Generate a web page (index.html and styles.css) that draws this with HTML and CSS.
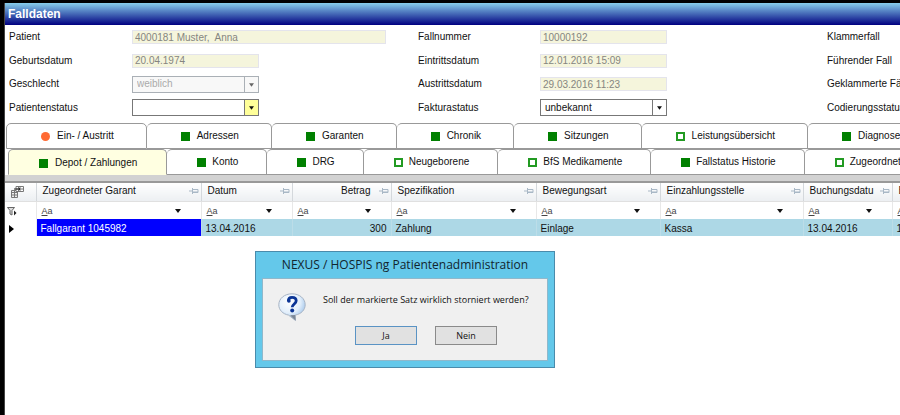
FILE: index.html
```html
<!DOCTYPE html>
<html lang="de">
<head>
<meta charset="utf-8">
<title>Falldaten</title>
<link rel="stylesheet" href="styles.css">
</head>
<body>
<svg class="defs" aria-hidden="true">
  <symbol id="pin" viewBox="0 0 10 8"><path d="M0 4h3M3.500 1v6M4 2.500h5v3H4M4 5h5" fill="none" stroke="#a9b8c6"/></symbol>
  <symbol id="arrow" viewBox="0 0 6 4"><path d="M0 0h6L3 4z" fill="currentColor"/></symbol>
</svg>
<main class="window">
  <h1 class="title">Falldaten</h1>
  <form class="fields">
    <label for="patient">Patient</label><input class="wide" id="patient" value="4000181 Muster,&nbsp; Anna" disabled>
    <label for="nr">Fallnummer</label><input id="nr" value="10000192" disabled>
    <span>Klammerfall</span>
    <label for="geb">Geburtsdatum</label><input id="geb" value="20.04.1974" disabled>
    <label for="ein">Eintrittsdatum</label><input id="ein" value="12.01.2016 15:09" disabled>
    <span>Führender Fall</span>
    <label for="sex">Geschlecht</label>
    <div class="combo off"><select id="sex" disabled><option>weiblich</option></select><svg><use href="#arrow"/></svg></div>
    <label for="aus">Austrittsdatum</label><input id="aus" value="29.03.2016 11:23" disabled>
    <span>Geklammerte Fälle</span>
    <label for="pst">Patientenstatus</label>
    <div class="combo yellow"><select id="pst"><option></option></select><svg><use href="#arrow"/></svg></div>
    <label for="fst">Fakturastatus</label>
    <div class="combo"><select id="fst"><option>unbekannt</option></select><svg><use href="#arrow"/></svg></div>
    <span>Codierungsstatus</span>
  </form>
  <nav class="tabs">
    <div class="tabrow upper">
      <button><i class="dot"></i>Ein- / Austritt</button><button><i class="full"></i>Adressen</button><button><i class="full"></i>Garanten</button><button><i class="full"></i>Chronik</button><button><i class="full"></i>Sitzungen</button><button><i class="open"></i>Leistungsübersicht</button><button><i class="full"></i>Diagnosen</button>
    </div>
    <div class="tabrow lower">
      <button class="active"><i class="full"></i>Depot / Zahlungen</button><button><i class="full"></i>Konto</button><button><i class="full"></i>DRG</button><button><i class="open"></i>Neugeborene</button><button><i class="open"></i>BfS Medikamente</button><button><i class="full"></i>Fallstatus Historie</button><button><i class="open"></i>Zugeordnete</button>
    </div>
  </nav>
  <div class="bar"></div>
  <table>
    <colgroup><col class="c-sel"><col class="c-gar"><col class="c-dat"><col class="c-bet"><col class="c-spe"><col class="c-bew"><col class="c-ste"><col class="c-buc"><col class="c-end"></colgroup>
    <thead>
      <tr>
        <th class="corner"><svg class="chooser" viewBox="0 0 13 12"><path d="M.5 4.500h6v7h-6zM.5 6.500h6M.5 9h6M3.500 4.500v7" fill="#eee" stroke="#777"/><path d="M5 .5h7.500v5H5zM5 3h7.500M9 .5v5" fill="#fff" stroke="#777"/><path d="M3 3h6M7 1.500 9 3 7 4.500" fill="none" stroke="#222"/></svg></th>
        <th><div>Zugeordneter Garant<svg><use href="#pin"/></svg></div></th>
        <th><div>Datum<svg><use href="#pin"/></svg></div></th>
        <th class="num"><div>Betrag<svg><use href="#pin"/></svg></div></th>
        <th><div>Spezifikation<svg><use href="#pin"/></svg></div></th>
        <th><div>Bewegungsart<svg><use href="#pin"/></svg></div></th>
        <th><div>Einzahlungsstelle<svg><use href="#pin"/></svg></div></th>
        <th><div>Buchungsdatu<svg><use href="#pin"/></svg></div></th>
        <th><div>B</div></th>
      </tr>
      <tr class="filter">
        <td class="rowhead"><svg class="funnel" viewBox="0 0 11 9"><path d="M.5.5h7L5 3.500V8L3 7V3.500z" fill="#ddd" stroke="#666"/><path d="M7 3.500v5L9.500 6z" fill="#222"/></svg></td>
        <td><div><u>A</u>a<svg><use href="#arrow"/></svg></div></td>
        <td><div><u>A</u>a<svg><use href="#arrow"/></svg></div></td>
        <td><div><u>A</u>a<svg><use href="#arrow"/></svg></div></td>
        <td><div><u>A</u>a<svg><use href="#arrow"/></svg></div></td>
        <td><div><u>A</u>a<svg><use href="#arrow"/></svg></div></td>
        <td><div><u>A</u>a<svg><use href="#arrow"/></svg></div></td>
        <td><div><u>A</u>a<svg><use href="#arrow"/></svg></div></td>
        <td><div><u>A</u>a</div></td>
      </tr>
    </thead>
    <tbody>
      <tr class="data">
        <td class="rowhead"><svg class="current" viewBox="0 0 5 8"><path d="M0 0l5 4-5 4z"/></svg></td>
        <td class="selected">Fallgarant 1045982</td><td>13.04.2016</td><td class="num">300</td><td>Zahlung</td><td>Einlage</td><td>Kassa</td><td>13.04.2016</td><td>1</td>
      </tr>
    </tbody>
  </table>
</main>
<section class="dialog" role="dialog" aria-labelledby="dlg">
  <h2 id="dlg">NEXUS / HOSPIS ng Patientenadministration</h2>
  <div class="body">
    <div class="message">
      <svg class="question" viewBox="0 0 28 28">
        <defs><radialGradient id="g" cx=".4" cy=".3" r=".75"><stop offset="0" stop-color="#fff"/><stop offset=".55" stop-color="#e3effb"/><stop offset="1" stop-color="#8db8e6"/></radialGradient></defs>
        <path d="M14 .8C6.500.8.8 5.500.8 11.800c0 5.200 4 9.200 9.700 10.300L17.500 27.500l-.3-5.400c5.900-1 10-5.200 10-10.300C27.200 5.500 21.500.8 14 .8z" fill="url(#g)" stroke="#a8b4c4"/>
        <path d="M12 22.300l5.500 5.200-.3-5.400z" fill="#7d8896"/>
        <path d="M10.300 8.200C10.300 5.500 12 4.300 14 4.300c2.600 0 4.200 1.300 4.200 3.400 0 3.200-4 3.400-4 6.600" fill="none" stroke="#0b3596" stroke-width="2.800"/>
        <circle cx="10.900" cy="8" r="1.800" fill="#0b3596"/><circle cx="14.200" cy="17.500" r="2" fill="#0b3596"/>
      </svg>
      <p>Soll der markierte Satz wirklich storniert werden?</p>
    </div>
    <div class="actions"><button class="default">Ja</button><button>Nein</button></div>
  </div>
</section>
</body>
</html>
```
FILE: styles.css
```css
* { box-sizing: border-box; }
html { background: #fff; }
body {
  margin: 0;
  min-height: 100vh;
  display: flex;
  overflow: hidden;
  position: relative;
  border-top: 3px solid #000;
  border-left: 4px solid #000;
  font: 10px/12px "Liberation Sans", Arial, sans-serif;
  color: #111;
}
button, input, select { font: inherit; color: inherit; }
.defs { position: absolute; width: 0; height: 0; }
.window { flex: 1; min-width: 0; border-left: 1px solid #444; }
.title {
  margin: 0;
  padding: 0 3px;
  height: 22px;
  font-size: 12px;
  line-height: 22px;
  color: #fff;
  background: linear-gradient(#87ceeb, #000080);
}
.fields {
  display: grid;
  grid-template-columns: 123px 286px 122px 287px max-content;
  grid-template-rows: 24px 23px 24px 23px;
  align-items: center;
  padding-left: 4px;
}
.fields input {
  width: 127px;
  height: 14px;
  padding: 0 2px;
  border: 1px solid #e4e4ec;
  background: #f5f5dc;
  color: #858580;
}
.fields .wide { width: 254px; }
.combo {
  display: grid;
  grid-template-columns: 1fr 14px;
  width: 127px;
  height: 17px;
  border: 1px solid #777;
  background: #fff;
}
.combo select {
  grid-area: 1 / 1 / 2 / 3;
  appearance: none;
  border: 0;
  margin: 0;
  padding: 0 4px;
  background: none;
  opacity: 1;
}
.combo svg {
  grid-area: 1 / 2;
  width: 14px;
  height: 15px;
  padding: 6px 4px 5px;
  border-left: 1px solid #777;
  pointer-events: none;
}
.combo.off { border-color: #aab0b6; background: #f8f8f8; color: #aaa; }
.combo.off svg { border-color: #aab0b6; color: #666; }
.combo.yellow svg { background: #ffff99; }
.tabs { padding: 4px 0 0 1px; }
.tabrow { display: flex; width: max-content; }
.tabrow button {
  display: flex;
  align-items: center;
  height: 26px;
  border: 1px solid #999;
  border-left-width: 0;
  border-radius: 5px 5px 0 0;
  background: #fff;
  white-space: nowrap;
}
.tabrow button:first-child { border-left-width: 1px; }
.upper button { gap: 7px; padding: 0 32px 0 34px; }
.lower { padding-left: 2px; }
.lower button { gap: 6px; padding: 0 28px 0 30px; }
.lower .active { gap: 7px; padding: 2px 29px 0 30px; background: #ffffe1; border-bottom-color: #ffffe1; }
.tabrow i { width: 9px; height: 9px; background: #008000; }
.tabrow .dot { border-radius: 50%; background: #ff6a33; }
.tabrow .open { border: 2px solid #229a22; background: #fff; }
.bar { height: 8px; border-bottom: 2px solid #999; background: #d2d2d2; }
table { table-layout: fixed; width: 927px; border-collapse: collapse; }
.c-sel { width: 31px; }
.c-gar { width: 165px; }
.c-dat { width: 91px; }
.c-bet { width: 99px; }
.c-spe { width: 145px; }
.c-bew { width: 124px; }
.c-ste { width: 143px; }
.c-buc { width: 89px; }
.c-end { width: 40px; }
th, td { padding: 0; text-align: left; font-weight: 400; white-space: nowrap; }
th {
  height: 18px;
  border-right: 1px solid #d4d8dc;
  border-bottom: 1px solid #e0e0e0;
  background: linear-gradient(#fff, #eceff2);
}
th div, .filter div { display: flex; align-items: center; justify-content: space-between; }
th div { padding: 0 2px 2px 6px; }
th div svg { width: 10px; height: 8px; }
.num div { justify-content: flex-end; gap: 8px; }
th svg, td svg { display: block; }
.corner { padding-left: 2px; }
.chooser { width: 13px; height: 12px; margin-left: 4px; }
.funnel { width: 11px; height: 9px; }
.current { width: 5px; height: 8px; margin-left: 2px; }
.filter td { height: 18px; padding-top: 2px; border-right: 1px solid #e8e8e8; font-size: 9px; color: #444; }
.filter div { justify-content: flex-start; padding: 0 20px 0 5px; }
.filter div svg { width: 6px; height: 4px; margin-left: auto; color: #111; }
.data td { height: 17px; padding: 2px 0 0 4px; background: #add8e6; border-right: 1px solid #bcdde8; }
.data .num { text-align: right; padding-right: 4px; }
.data .selected { background: #00f; color: #fff; }
.data .rowhead { background: #fff; border-right-color: #eee; }
.data .rowhead, .filter .rowhead { padding-left: 2px; }
.dialog {
  position: absolute;
  left: 251px;
  top: 248px;
  width: 300px;
  padding: 0 6px 6px;
  border: 1px solid #4a8bab;
  background: #64c8ea;
}
.dialog h2 {
  margin: 0;
  font: 12px/26px "Open Sans", "Noto Sans", sans-serif;
  text-align: center;
  color: #12252e;
}
.body { height: 83px; border: 1px solid #8fb8cb; background: #f0f0f0; font: 9px/12px "Open Sans", sans-serif; }
.message { display: flex; gap: 17px; padding: 14px 0 0 15px; }
.question { width: 28px; height: 28px; }
.message p { margin: 1px 0 0; }
.actions { display: flex; gap: 18px; padding: 5px 0 0 92px; }
.actions button { width: 62px; height: 19px; padding: 0; border: 1px solid #8a8a8a; background: #e1e1e1; }
.actions .default { border-color: #5a93c4; }
```
